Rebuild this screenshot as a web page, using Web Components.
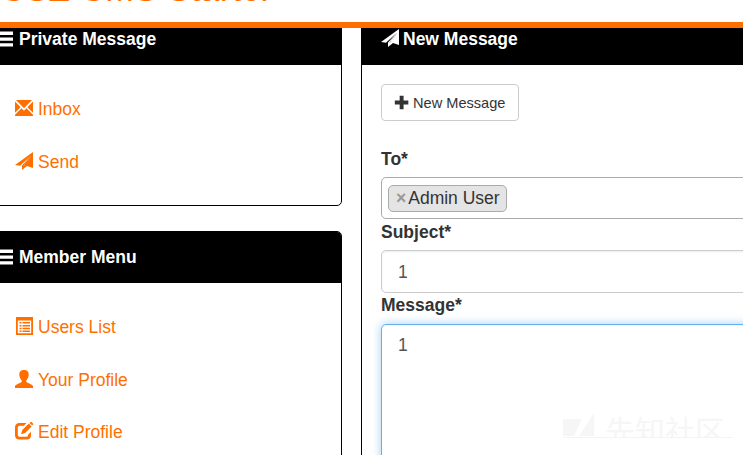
<!DOCTYPE html>
<html lang="en"><head><meta charset="utf-8"><title>New Message</title>
<style>html,body{margin:0;height:455px;overflow:hidden;background:#fff}</style></head>
<body><message-page></message-page>
<script>
const icons={
bars:'<path d="M0 1.500h18v3.500H0zM0 7.500h18v3.200H0zM0 13.200h18v3.300H0z"/>',
mail:'<path d="M1 1h16L9 9.200zM0 2.600 5.600 8.300 0 13.800zM18 2.600v11.200l-5.600-5.500zM0 17v-1.200l6.500-6.500L9 11.700l2.500-2.400 6.500 6.500V17z"/>',
plane:'<path fill-rule="evenodd" d="M0 13 18 0v16l-6-2-5 4v-4.500L15.500 4 5 13.800zM8.500 13.200 16 4l-5.500 9.800z"/><path d="M8.500 13.500 16.500 3 11 14z"/>',
list:'<path fill-rule="evenodd" d="M1 0h17v18H1zM2.800 3.500v12.700h13.400V3.500zM4.500 5h2v1.500h-2zm3 0H15v1.500H7.500zM4.500 8h2v1.500h-2zm3 0H15v1.500H7.500zM4.500 10.700h2v1.500h-2zm3 0H15v1.500H7.500zM4.500 13.400h2v1.500h-2zm3 0H15v1.500H7.500z"/>',
user:'<path d="M9 0c3.300 0 5 2 4.700 5-.2 2.500-1.400 4.500-2.400 5.500v1.300c0 1 5.700 2.400 6.700 4.300V18H0v-1.900c1-1.900 6.700-3.300 6.700-4.300v-1.300C5.700 9.500 4.500 7.500 4.300 5 4 2 5.700 0 9 0z"/>',
edit:'<path d="M11.500 1H4.500Q0 1 0 5.500V13Q0 17.500 4.500 17.500h7Q16 17.500 16 13v-3.200l-2.800 2.700v.5Q13.200 14.700 11.500 14.700h-7Q2.800 14.700 2.800 13V5.500Q2.800 3.800 4.500 3.800h4.300z"/><path d="m6 12.300 1.300-4.200L13.800 1.600l2.800 2.800-6.500 6.500zM14.600.9 15.500 0q.5-.4 1 0L18 1.500q.3.500 0 1l-.9.900z"/>',
plus:'<path d="M6.800 1h4.700v5.600h5.700v4.800h-5.700V17H6.800v-5.600H1V6.600h5.800z"/>'};
function define(name,html,setup){
 customElements.define(name,class extends HTMLElement{connectedCallback(){
  if(this.shadowRoot)return;
  this.attachShadow({mode:'open'}).innerHTML=html;
  if(setup)setup(this);
 }});
}
define('glyph-icon','<style>:host{display:inline-block;width:18px;height:18px;flex:none}svg{display:block;width:100%;height:100%;fill:currentColor}</style><svg viewBox="0 0 18 18"></svg>',e=>e.shadowRoot.querySelector('svg').innerHTML=icons[e.getAttribute('name')]);
define('site-banner','<style>:host{display:flex;align-items:flex-end;height:22px;border-bottom:6px solid #ff6f00;overflow:hidden;color:#ff6f00;font-size:35px;line-height:40px;white-space:nowrap;box-sizing:content-box}span{margin:0 0 13px 0}</style><span><slot></slot></span>');
define('panel-box','<style>:host{display:flex;flex-direction:column;box-sizing:border-box;border:1px solid #000;border-radius:5px;background:#fff;overflow:hidden}header{display:flex;align-items:center;gap:4px;box-sizing:border-box;height:51px;flex:none;background:#000;color:#fff;font-weight:bold;white-space:nowrap;padding:0 0 1px 19px}</style><header><slot name="title"></slot></header><slot></slot>');
define('menu-item','<style>:host{display:flex;align-items:center;gap:5px;height:52.5px;padding-left:33px;color:#ff6f00;white-space:nowrap}glyph-icon{margin-top:-3px}</style><glyph-icon></glyph-icon><span><slot></slot></span>',e=>{const i=e.shadowRoot.querySelector('glyph-icon');i.shadowRoot.querySelector('svg').innerHTML=icons[e.getAttribute('icon')]});
define('action-button','<style>:host{display:inline-flex;box-sizing:border-box;width:138px;height:37px;border:1px solid #ccc;border-radius:4px;align-items:center;padding-left:12px;gap:4px;font-size:14.6px;color:#333;white-space:nowrap}glyph-icon{width:15px;height:15px;margin-top:-1px}span{padding-top:1px}</style><glyph-icon name="plus"></glyph-icon><span><slot></slot></span>');
define('field-label','<style>:host{display:block;font-weight:bold;height:31px;line-height:27px;color:#333}:host([tight]){line-height:25px}</style><slot></slot>');
define('text-field','<style>:host{display:block;box-sizing:border-box;height:43px;border:1px solid #ccc;border-radius:5px;padding:0 16px;line-height:42px;color:#555;box-shadow:inset 0 1px 2px rgba(0,0,0,.08)}:host([focused]){height:160px;line-height:40px;border-color:#66afe9;box-shadow:inset 0 1px 1px rgba(0,0,0,.04),0 0 10px rgba(102,175,233,.6)}</style><slot></slot>');
define('tag-field','<style>:host{display:flex;box-sizing:border-box;height:42px;border:1px solid #aaa;border-radius:5px;padding:7px 6px}</style><slot></slot>');
define('user-tag','<style>:host{display:flex;box-sizing:border-box;width:119px;height:27px;border:1px solid #aaa;border-radius:5px;background:#e4e4e4;color:#333;padding-left:7px;gap:2px;line-height:25px;white-space:nowrap}b{color:#999}</style><b>×</b><span><slot></slot></span>');
define('water-mark','<style>:host{display:flex;gap:10px;position:absolute;left:563px;top:412px;width:170px;height:26px;overflow:hidden;color:#f6f6f6;box-sizing:border-box;border-bottom:1px solid #f4f4f0}svg{width:32px;height:24px;flex:none}span{font:400 30px/35px "Noto Sans CJK SC",sans-serif;white-space:nowrap}</style><svg viewBox="0 0 32 24" fill="currentColor"><path d="M0 7h19L11 24H0zM31 1v23H16z"/></svg><span><slot></slot></span>');
define('message-page',`<style>
:host{display:block;position:relative;width:743px;height:455px;overflow:hidden;background:#fff;font:17.5px/25px "Liberation Sans",Arial,sans-serif;color:#333}
main{display:flex;gap:19px;height:427px;overflow:hidden}
aside{display:flex;flex-direction:column;gap:25px;width:361px;margin-left:-19px;margin-top:-15px;flex:none}
.private{height:193px;flex:none}.member{height:300px;flex:none}nav{padding-top:18.3px}
.bars{margin:-1px 2px 0 -6px}
.compose{width:430px;height:520px;margin-top:-15px;flex:none}
.plane{margin-top:-2px}
form{display:block;padding:19px 19px 0}
action-button{margin-bottom:25px}
</style><site-banner>CSZ CMS Starter</site-banner><main><aside>
<panel-box class="private"><glyph-icon slot="title" name="bars" class="bars"></glyph-icon><span slot="title">Private Message</span><nav><menu-item icon="mail">Inbox</menu-item><menu-item icon="plane">Send</menu-item></nav></panel-box>
<panel-box class="member"><glyph-icon slot="title" name="bars" class="bars"></glyph-icon><span slot="title">Member Menu</span><nav><menu-item icon="list">Users List</menu-item><menu-item icon="user">Your Profile</menu-item><menu-item icon="edit">Edit Profile</menu-item></nav></panel-box>
</aside><panel-box class="compose"><glyph-icon slot="title" name="plane" class="plane"></glyph-icon><span slot="title">New Message</span><form><action-button>New Message</action-button><field-label>To*</field-label><tag-field><user-tag>Admin User</user-tag></tag-field><field-label>Subject*</field-label><text-field>1</text-field><field-label tight>Message*</field-label><text-field focused>1</text-field></form></panel-box></main><water-mark>先知社区</water-mark>`);
</script></body></html>
